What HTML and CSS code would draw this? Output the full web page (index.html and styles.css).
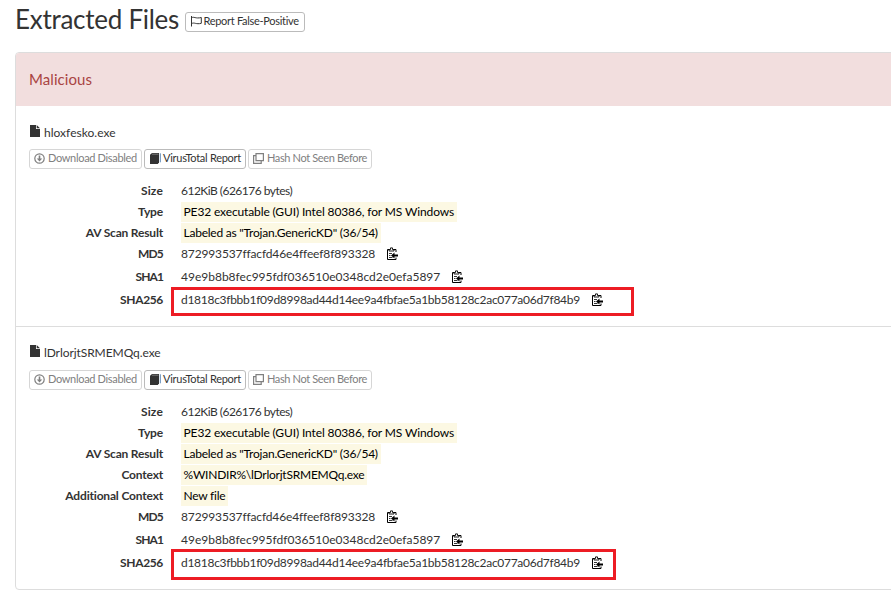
FILE: index.html
```html
<!DOCTYPE html>
<html lang="en">
<head>
<meta charset="utf-8">
<title>Extracted Files</title>
<link rel="stylesheet" href="styles.css">
</head>
<body>
<svg class="sprite" aria-hidden="true">
  <symbol id="flag" viewBox="0 0 12 11"><path d="M1.500 0v10.500M1.500 1.800C4 .2 5.500 3 11.300 1.500V7.300C6 8.700 4.500 6 1.500 7.600" fill="none" stroke="currentColor" stroke-width="1"/></symbol>
  <symbol id="file" viewBox="0 0 10 12"><path d="M0 0h6v4h4v8H0zM6.700 0L10 3.300H6.700z" fill="currentColor"/></symbol>
  <symbol id="download" viewBox="0 0 11 11"><circle cx="5.500" cy="5.500" r="4.700" fill="none" stroke="currentColor" stroke-width="1.200"/><path d="M4.700 2.500h1.600v3h2L5.500 8.500 2.700 5.500h2z" fill="currentColor"/></symbol>
  <symbol id="book" viewBox="0 0 11 11"><path d="M2 0h7v9.300L7.800 11H0V1.800z" fill="#333"/><path d="M10.300 .3v9" stroke="#5a88b8"/><path d="M2 1.200h6.500" stroke="#999" stroke-width=".7"/></symbol>
  <symbol id="copy" viewBox="0 0 11 11"><path d="M3 .6h7.400v7H3zM2.600 2.600H.6v7.800h7.600V8" fill="none" stroke="currentColor" stroke-width="1.200"/></symbol>
  <symbol id="clip" viewBox="0 0 12 13"><path d="M3 2.500H1.500v10h8.500V10.500M8 2.500h2V5" fill="none" stroke="#000"/><path d="M3 4V2.500h1.500V.9h2v1.600H8V4z" fill="#fff" stroke="#000" stroke-width=".9"/><path d="M3 6.500h3M3 8.500h1.500M3 10.500h3.500" stroke="#000" stroke-width=".8"/><path d="M5 8.500l3.500-3v2H12v2H8.500v2z" fill="#000"/></symbol>
</svg>

<header class="page-head">
  <h1>Extracted Files</h1>
  <button class="btn btn-report"><svg class="i-flag"><use href="#flag"/></svg><span>Report False-Positive</span></button>
</header>

<main class="panel">
  <h2 class="panel-head">Malicious</h2>

  <section class="entry">
    <div class="name"><svg><use href="#file"/></svg><span>hloxfesko.exe</span></div>
    <div class="actions">
      <button class="btn muted b-download"><svg><use href="#download"/></svg><span>Download Disabled</span></button>
      <button class="btn b-vt"><svg><use href="#book"/></svg><span>VirusTotal Report</span></button>
      <button class="btn muted b-hash"><svg><use href="#copy"/></svg><span>Hash Not Seen Before</span></button>
    </div>
    <dl>
      <div class="row"><dt class="k-size">Size</dt><dd class="v-size">612KiB (626176 bytes)</dd></div>
      <div class="row"><dt>Type</dt><dd><mark class="v-type">PE32 executable (GUI) Intel 80386, for MS Windows</mark></dd></div>
      <div class="row"><dt>AV Scan Result</dt><dd><mark class="v-av">Labeled as "Trojan.GenericKD" (36/54)</mark></dd></div>
      <div class="row hash"><dt class="k-md5">MD5</dt><dd><span class="v-md5">872993537ffacfd46e4ffeef8f893328</span><svg><use href="#clip"/></svg></dd></div>
      <div class="row hash"><dt class="k-sha1">SHA1</dt><dd><span class="v-sha1">49e9b8b8fec995fdf036510e0348cd2e0efa5897</span><svg><use href="#clip"/></svg></dd></div>
      <div class="row hash"><dt class="k-sha256">SHA256</dt><dd><span class="v-sha256">d1818c3fbbb1f09d8998ad44d14ee9a4fbfae5a1bb58128c2ac077a06d7f84b9</span><svg><use href="#clip"/></svg><i class="outline outline-wide"></i></dd></div>
    </dl>
  </section>

  <section class="entry">
    <div class="name name-long"><svg><use href="#file"/></svg><span>lDrlorjtSRMEMQq.exe</span></div>
    <div class="actions">
      <button class="btn muted b-download"><svg><use href="#download"/></svg><span>Download Disabled</span></button>
      <button class="btn b-vt"><svg><use href="#book"/></svg><span>VirusTotal Report</span></button>
      <button class="btn muted b-hash"><svg><use href="#copy"/></svg><span>Hash Not Seen Before</span></button>
    </div>
    <dl>
      <div class="row"><dt class="k-size">Size</dt><dd class="v-size">612KiB (626176 bytes)</dd></div>
      <div class="row"><dt>Type</dt><dd><mark class="v-type">PE32 executable (GUI) Intel 80386, for MS Windows</mark></dd></div>
      <div class="row"><dt>AV Scan Result</dt><dd><mark class="v-av">Labeled as "Trojan.GenericKD" (36/54)</mark></dd></div>
      <div class="row"><dt>Context</dt><dd><mark class="v-context">%WINDIR%\lDrlorjtSRMEMQq.exe</mark></dd></div>
      <div class="row"><dt>Additional Context</dt><dd><mark class="v-context">New file</mark></dd></div>
      <div class="row hash"><dt class="k-md5">MD5</dt><dd><span class="v-md5">872993537ffacfd46e4ffeef8f893328</span><svg><use href="#clip"/></svg></dd></div>
      <div class="row hash"><dt class="k-sha1">SHA1</dt><dd><span class="v-sha1">49e9b8b8fec995fdf036510e0348cd2e0efa5897</span><svg><use href="#clip"/></svg></dd></div>
      <div class="row hash"><dt class="k-sha256">SHA256</dt><dd><span class="v-sha256">d1818c3fbbb1f09d8998ad44d14ee9a4fbfae5a1bb58128c2ac077a06d7f84b9</span><svg><use href="#clip"/></svg><i class="outline outline-narrow"></i></dd></div>
    </dl>
  </section>
</main>
</body>
</html>
```
FILE: styles.css
```css
* { box-sizing: border-box; }
body {
  margin: 0;
  height: 599px;
  overflow: hidden;
  background: #fff;
  color: #333;
  font: 12px/20px Lato, "Liberation Sans", sans-serif;
}
svg { display: block; flex: none; }
.sprite { display: none; }
.page-head { display: flex; height: 52px; padding-left: 15px; }
h1 { width: 170px; margin: 3px 0 0; font-size: 26px; line-height: 32px; font-weight: 400; letter-spacing: -.27px; white-space: nowrap; }
.btn {
  display: flex;
  align-items: center;
  height: 20px;
  padding: 0 0 2px 5px;
  border: 1px solid #bbb;
  border-radius: 3px;
  background: #fff;
  color: #333;
  font: 11px/16px Lato, "Liberation Sans", sans-serif;
  white-space: nowrap;
}
.btn svg { width: 11px; height: 11px; margin: 0 2.500px 0 -.5px; }
.btn.muted { border-color: #d6d6d6; color: #808080; }
.btn-report { width: 120px; margin-top: 12px; letter-spacing: -.3px; }
.btn .i-flag { width: 12px; margin: 0 1.500px 0 -1px; }
.b-download { width: 113px; letter-spacing: -.32px; }
.b-download svg, .b-hash svg { position: relative; left: -.5px; }
.b-vt { width: 102px; letter-spacing: -.27px; }
.b-hash { width: 124px; letter-spacing: -.365px; }

.panel { width: 900px; height: 538px; margin-left: 15px; border: 1px solid #ddd; border-radius: 4px; }
.panel-head { height: 53px; margin: 0; padding-left: 13px; background: #f2dede; color: #a94442; font-size: 15px; line-height: 53px; font-weight: 400; letter-spacing: .06px; border-radius: 3px 0 0; }
.entry { height: 220px; padding: 17px 0 0 13px; }
.entry + .entry { height: 263px; padding-top: 16px; border-top: 1px solid #ddd; }
.entry + .entry .actions { margin-top: 7px; }
.name { display: flex; align-items: center; height: 20px; line-height: 20px; letter-spacing: .02px; }
.name svg { width: 10px; height: 12px; margin: -4px 4.500px 0 .5px; }
.name-long { letter-spacing: -.07px; }
.actions { display: flex; gap: 2px; margin-top: 6px; }
dl { margin: 11px 0 0; }
.row { display: grid; grid-template-columns: 134px 1fr; column-gap: 18px; height: 21px; line-height: 21px; }
.hash { height: 23px; }
dt { text-align: right; font-weight: 700; letter-spacing: -.18px; }
dd { display: flex; position: relative; align-items: center; margin: 0; height: 21px; }
dd svg { width: 12px; height: 13px; margin-left: 11px; }
mark { height: 20px; padding: 0 3px 0 2.500px; background: #fcf8e3; color: #000; line-height: 19px; }
.k-size { letter-spacing: .15px; }
.k-md5 { letter-spacing: -.8px; }
.k-sha1 { letter-spacing: -.9px; }
.k-sha256 { letter-spacing: -.34px; }
.v-size { letter-spacing: -.52px; }
.v-type { letter-spacing: -.127px; }
.v-av { letter-spacing: -.23px; }
.v-context { letter-spacing: -.235px; }
.v-md5 { letter-spacing: -.14px; }
.v-sha256 { letter-spacing: -.285px; }
.outline { position: absolute; left: -10px; top: -3px; border: 3px solid #ed1c24; }
.outline-wide { top: -2px; width: 463px; height: 29px; }
.outline-narrow { width: 445px; height: 31px; }
```
